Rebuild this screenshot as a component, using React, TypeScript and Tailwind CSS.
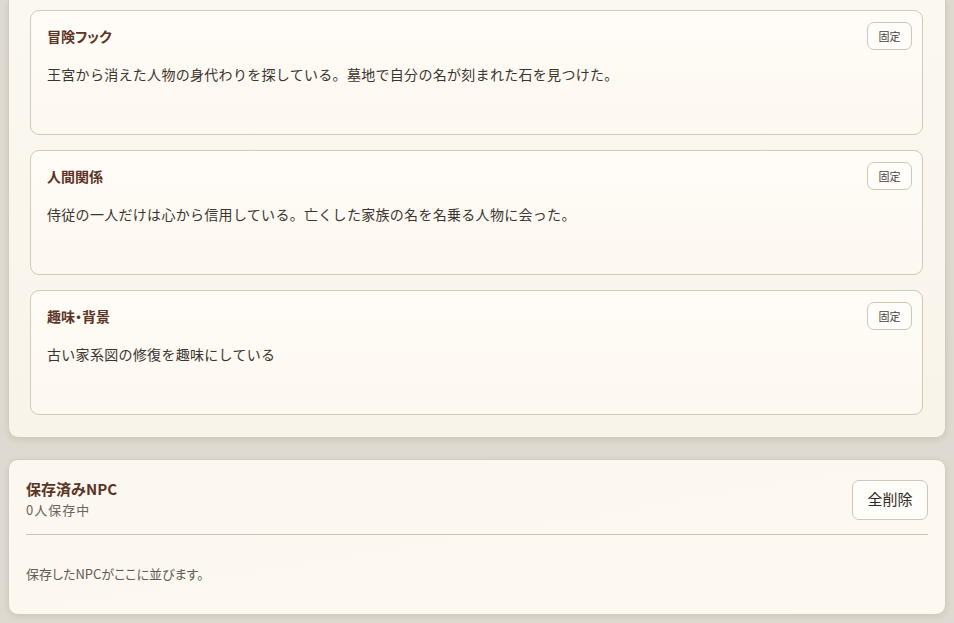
import React from "react";

const cards = [
  { title: "冒険フック", body: "王宮から消えた人物の身代わりを探している。墓地で自分の名が刻まれた石を見つけた。" },
  { title: "人間関係", body: "侍従の一人だけは心から信用している。亡くした家族の名を名乗る人物に会った。" },
  { title: "趣味・背景", body: "古い家系図の修復を趣味にしている" },
];

export default function App() {
  return (
    <div
      className="w-[954px] h-[623px] overflow-hidden bg-[#dedad1] px-2 pb-[9px]"
      style={{ fontFamily: '"Noto Sans CJK JP", "Noto Sans", sans-serif' }}
    >
      <div className="rounded-b-[10px] border border-t-0 border-[#d3cbbd] bg-gradient-to-b from-[#fbf8f1] to-[#f9f4ea] pl-[21px] pr-[22px] pt-[10px] pb-[22px] shadow-[0_2px_6px_rgba(120,100,70,0.15)] flex flex-col gap-[15px]">
        {cards.map((c) => (
          <div
            key={c.title}
            className="h-[125px] rounded-[9px] border border-[#d2c9ba] bg-gradient-to-b from-[#fffcf7] to-[#fdf8f0] pl-4 pr-[10px] pt-[11px]"
          >
            <div className="flex h-7 items-center justify-between">
              <div
                className="text-[14px] font-bold text-[#5b3426] leading-5"
                style={{ fontFeatureSettings: '"palt"' }}
              >
                {c.title}
              </div>
              <button className="h-7 w-[45px] rounded-[7px] border border-[#cfc6b6] bg-[#fffdf9] text-[11px] text-[#4a4440]">
                固定
              </button>
            </div>
            <div className="mt-[12px] text-[14px] leading-6 tracking-[0.3px] text-[#3b342f]">{c.body}</div>
          </div>
        ))}
      </div>

      <div className="mt-[21px] h-[156px] rounded-[10px] border border-[#d3cbbd] bg-gradient-to-br from-[#fcf8f1] to-[#fdf8f0] px-[17px] pt-[19px] shadow-[0_2px_6px_rgba(120,100,70,0.15)]">
        <div className="flex items-center justify-between border-b border-[#cfc4b3] pb-[14px]">
          <div>
            <div className="text-[15px] font-bold leading-5 text-[#5b3426]">保存済みNPC</div>
            <div className="mt-[1px] text-[13px] leading-5 text-[#6b645e] tracking-[1px]">0人保存中</div>
          </div>
          <button className="h-10 w-[76px] rounded-[7px] border border-[#cfc6b6] bg-[#fffdf9] text-[15px] text-[#2f2a26]">
            全削除
          </button>
        </div>
        <div
          className="mt-[29px] text-[13px] leading-5 text-[#625b55]"
          style={{ fontFeatureSettings: '"palt"' }}
        >
          保存したNPCがここに並びます。
        </div>
      </div>
    </div>
  );
}
